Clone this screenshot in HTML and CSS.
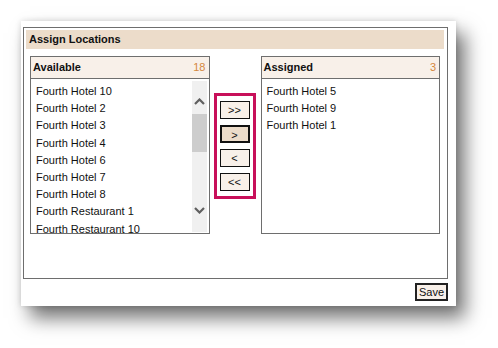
FILE: index.html
```html
<!DOCTYPE html>
<html lang="en">
<head>
  <meta charset="UTF-8" />
  <title>Assign Locations</title>
  <link rel="stylesheet" href="styles.css">
</head>
<body>
  <div class="card">
    <div class="panel">
      <div class="panel-title">Assign Locations</div>

      <div class="lists">
        <!-- available -->
        <div class="listbox">
          <div class="list-head"><span>Available</span><span class="count">18</span></div>
          <div class="list-body">
            <ul class="items">
              <li>Fourth Hotel 10</li>
              <li>Fourth Hotel 2</li>
              <li>Fourth Hotel 3</li>
              <li>Fourth Hotel 4</li>
              <li>Fourth Hotel 6</li>
              <li>Fourth Hotel 7</li>
              <li>Fourth Hotel 8</li>
              <li>Fourth Restaurant 1</li>
              <li>Fourth Restaurant 10</li>
            </ul>
            <div class="scrollbar">
              <svg class="arrow up" width="11" height="7" viewBox="0 0 11 7"><path d="M1 6 L5.5 1.5 L10 6" fill="none" stroke="#606060" stroke-width="2.2"/></svg>
              <div class="thumb"></div>
              <svg class="arrow down" width="11" height="7" viewBox="0 0 11 7"><path d="M1 1 L5.5 5.5 L10 1" fill="none" stroke="#606060" stroke-width="2.2"/></svg>
            </div>
          </div>
        </div>

        <!-- move buttons -->
        <div class="movers">
          <button class="mv">&gt;&gt;</button>
          <button class="mv active">&gt;</button>
          <button class="mv">&lt;</button>
          <button class="mv">&lt;&lt;</button>
        </div>

        <!-- assigned -->
        <div class="listbox">
          <div class="list-head"><span>Assigned</span><span class="count">3</span></div>
          <div class="list-body">
            <ul class="items">
              <li>Fourth Hotel 5</li>
              <li>Fourth Hotel 9</li>
              <li>Fourth Hotel 1</li>
            </ul>
          </div>
        </div>
      </div>
    </div>

    <div class="actions">
      <button class="save">Save</button>
    </div>
  </div>
</body>
</html>
```

FILE: styles.css
```css
*{box-sizing:border-box}
html,body{height:100%}
body{
  margin:0;
  padding:21px 0 0 21px;
  background:#fff;
  font-family:'Liberation Sans',Arial,sans-serif;
  font-size:11px;
  color:#111;
}

.card{
  width:435px;
  height:285px;
  padding:6px 8px 0 2px;
  background:#fff;
  box-shadow:0 0 6px rgba(0,0,0,.15),9px 12px 18px rgba(0,0,0,.55);
}

.panel{
  height:252px;
  border:1px solid #6e6e6e;
  padding:2px 3px 0 2px;
}
.panel-title{
  height:19px;
  line-height:19px;
  padding-left:3px;
  background:#ecdcca;
  font-weight:bold;
}

.lists{display:flex;align-items:flex-start;margin:7px 4px 0 4px}

.listbox{width:180px;height:178px;border:1px solid #6e6e6e}
.list-head{
  display:flex;
  justify-content:space-between;
  height:22px;
  line-height:21px;
  padding:0 3px 0 2px;
  background:#f8f0e9;
  border-bottom:1px solid #6e6e6e;
  font-weight:bold;
}
.list-head .count{color:#d4873e;font-weight:normal}

.list-body{display:flex;height:154px}
.items{
  flex:1;
  margin:0;
  padding:4px 0 0 5px;
  list-style:none;
  overflow:hidden;
  line-height:17.2px;
}

/* fake windows scrollbar */
.scrollbar{
  display:flex;
  flex-direction:column;
  align-items:center;
  width:15px;
  margin:2px 2px 1px 0;
  background:#f0f0f0;
}
.arrow.up{margin-top:17px}
.thumb{width:15px;height:38px;margin-top:9px;background:#cdcdcd}
.arrow.down{margin-top:auto;margin-bottom:18px}

.movers{
  display:flex;
  flex-direction:column;
  gap:6px;
  margin:37px 5px 0 4px;
  padding:5px 3px;
  border:3px solid #c8105a;
}
.mv{
  width:30px;
  height:18px;
  padding:0;
  background:#f8f0e9;
  border:1px solid #111;
  font-family:inherit;
  font-size:11px;
  color:#111;
  line-height:16px;
}
.mv.active{background:#ecdcca;border-width:2px}

.actions{display:flex;justify-content:flex-end;margin-top:4px}
.save{
  width:33px;
  height:18px;
  padding:0;
  background:#f8f0e9;
  border:2px solid #222;
  font-family:inherit;
  font-size:11px;
  color:#111;
}
```
